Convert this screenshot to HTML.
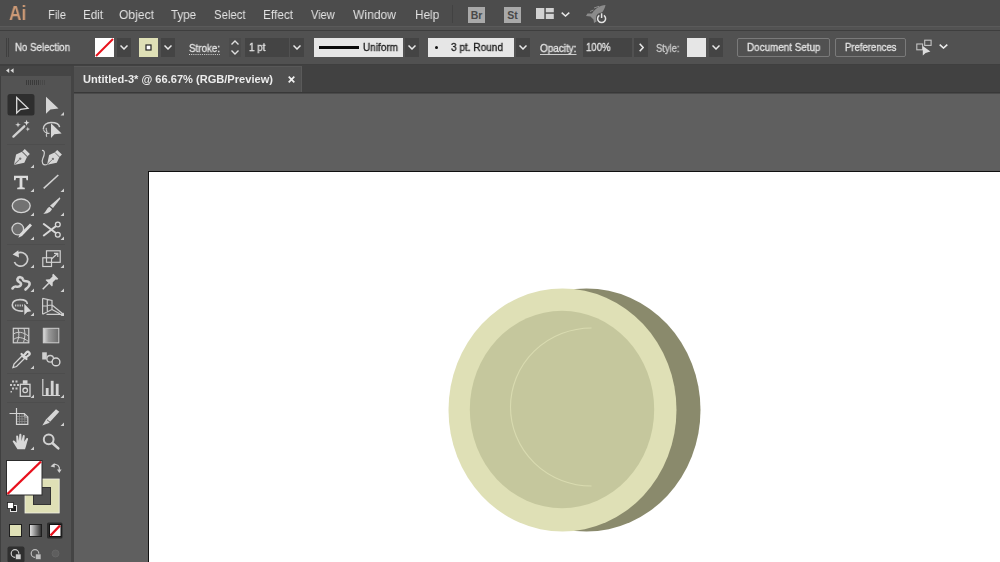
<!DOCTYPE html>
<html>
<head>
<meta charset="utf-8">
<style>
*{box-sizing:border-box;margin:0;padding:0}
html,body{width:1000px;height:562px;overflow:hidden;background:#5f5f5f;font-family:"Liberation Sans",sans-serif;}
.abs{position:absolute}
#menubar{left:0;top:0;width:1000px;height:26px;background:#4c4c4c}
#menusep1{left:0;top:26px;width:1000px;height:1px;background:#5a5a5a}
#menusep2{left:0;top:27px;width:1000px;height:3px;background:#525252}
#menusep3{left:0;top:30px;width:1000px;height:1px;background:#3e3e3e}
#ctrlbar{left:0;top:31px;width:1000px;height:33px;background:#515151}
#ctrlsep{left:0;top:64px;width:1000px;height:2px;background:#3f3f3f}
.mi,.ct,.tt{will-change:transform}
.mi{position:absolute;transform-origin:0 0;top:7px;font-size:13px;color:#e2e2e2;line-height:16px;white-space:nowrap}
.ct{position:absolute;transform-origin:0 0;font-size:10.5px;color:#e4e4e4;-webkit-text-stroke:0.3px currentColor;line-height:12px;white-space:nowrap}
.tt{position:absolute;transform-origin:0 0;font-size:11px;font-weight:bold;color:#ececec;line-height:13px;white-space:nowrap}
.dd{position:absolute;top:38px;width:14px;height:19px;background:#444444}
.dd svg{position:absolute;left:3px;top:7px}
.inp{position:absolute;top:38px;height:19px;background:#444444}
.lbox{position:absolute;top:38px;height:19px;background:#e6e6e6}
.btn{position:absolute;top:38px;height:19px;border:1px solid #7a7a7a;border-radius:2px}
#tabbar{left:74px;top:65px;width:926px;height:28px;background:#414141;border-bottom:1px solid #383838}
#tab{left:74px;top:66px;width:228px;height:26px;background:#505050;border-right:1px solid #5a5a5a;border-top:1px solid #585858}
#tabline{left:74px;top:93px;width:926px;height:1px;background:#4a4a4a}
#paste{left:74px;top:94px;width:926px;height:468px;background:#5f5f5f}
#art{left:148px;top:171px;width:860px;height:400px;background:#ffffff;border:1px solid #101010}
#tools{left:0;top:66px;width:71px;height:496px;background:#535353;border-left:1.500px solid #3f3f3f}
#toolhead{left:0;top:66px;width:71px;height:10px;background:#454545}
#toolgap{left:71px;top:66px;width:3px;height:496px;background:#444444}
</style>
</head>
<body>
<div class="abs" id="menubar"></div>
<div class="abs" id="menusep1"></div>
<div class="abs" id="menusep2"></div>
<div class="abs" id="menusep3"></div>
<div class="abs" id="ctrlbar"></div>
<div class="abs" id="ctrlsep"></div>

<!-- MENU -->
<div class="abs" style="will-change:transform;left:8.5px;top:2px;font-size:20px;line-height:22px;color:#cd9a76;font-weight:bold;transform-origin:0 0;transform:scaleX(.86)">Ai</div>
<div class="mi" style="left:47.5px;transform:scaleX(0.859)">File</div>
<div class="mi" style="left:82.5px;transform:scaleX(0.893)">Edit</div>
<div class="mi" style="left:119px;transform:scaleX(0.931)">Object</div>
<div class="mi" style="left:171px;transform:scaleX(0.887)">Type</div>
<div class="mi" style="left:214px;transform:scaleX(0.872)">Select</div>
<div class="mi" style="left:263px;transform:scaleX(0.909)">Effect</div>
<div class="mi" style="left:310.75px;transform:scaleX(0.850)">View</div>
<div class="mi" style="left:353px;transform:scaleX(0.930)">Window</div>
<div class="mi" style="left:414.5px;transform:scaleX(0.907)">Help</div>

<!-- MENU ICONS -->
<div class="abs" style="left:452px;top:5px;width:1px;height:18px;background:#424242"></div>
<div class="abs" style="left:468px;top:7px;width:17px;height:16px;background:#a9a9a9"></div>
<div class="abs" style="left:468px;top:8.5px;width:17px;text-align:center;font-size:10.5px;line-height:13px;font-weight:bold;color:#484848">Br</div>
<div class="abs" style="left:504px;top:7px;width:17px;height:16px;background:#a9a9a9"></div>
<div class="abs" style="left:504px;top:8.500px;width:17px;text-align:center;font-size:10.5px;line-height:13px;font-weight:bold;color:#484848">St</div>
<svg class="abs" style="left:536px;top:8px" width="18" height="12" viewBox="0 0 18 12"><rect x="0" y="0" width="8.300" height="11" fill="#d2d2d2"/><rect x="9.800" y="0" width="8" height="4.300" fill="#d2d2d2"/><rect x="9.800" y="5.800" width="8" height="5.200" fill="#d2d2d2"/></svg>
<svg class="abs" style="left:561px;top:12px" width="9" height="5" viewBox="0 0 9 5"><path d="M0.7 0.6 L4.500 4 L8.300 0.6" fill="none" stroke="#e6e6e6" stroke-width="1.500"/></svg>
<svg class="abs" style="left:585px;top:4px" width="24" height="20" viewBox="0 0 24 20"><path d="M20.500 1 C15 1.500 10 4.500 7 9.500 L2.500 9.500 L1 12 L5.500 12.500 L8.500 15.500 L9 19 L11.500 17.500 L11.500 13 C16 10.500 19.500 6.500 20.500 1 Z" fill="#8b8b8b"/><path d="M9 4 L14 2.300 M5 7.500 L8.500 6" stroke="#8b8b8b" stroke-width="1"/><circle cx="16.600" cy="14" r="5.600" fill="#4c4c4c"/><path d="M14.300 11.300 A4 4 0 1 0 18.900 11.300" fill="none" stroke="#e4e4e4" stroke-width="1.500"/><path d="M16.600 9.300 V14" stroke="#e4e4e4" stroke-width="1.500"/></svg>
<!-- CONTROL BAR -->
<div class="abs" style="left:6px;top:38px;width:1px;height:19px;background:#3f3f3f"></div>
<div class="abs" style="left:8px;top:38px;width:1px;height:19px;background:#3f3f3f"></div>
<div class="ct" style="left:15px;top:40.5px;transform:scaleX(0.924)">No Selection</div>
<!-- fill swatch -->
<svg class="abs" style="left:95px;top:38px" width="19" height="19" viewBox="0 0 19 19"><rect width="19" height="19" fill="#ffffff"/><line x1="1" y1="18" x2="18" y2="1" stroke="#e8111b" stroke-width="2"/></svg>
<div class="dd" style="left:117px"><svg width="8" height="5" viewBox="0 0 8 5"><path d="M0.5 0.5 L4 4 L7.5 0.5" fill="none" stroke="#e8e8e8" stroke-width="1.5"/></svg></div>
<!-- stroke swatch -->
<svg class="abs" style="left:139px;top:38px" width="19" height="19" viewBox="0 0 19 19"><rect width="19" height="19" fill="#dfe0b6"/><rect x="7" y="7" width="5" height="5" fill="#fff" stroke="#222" stroke-width="1.2"/></svg>
<div class="dd" style="left:161px"><svg width="8" height="5" viewBox="0 0 8 5"><path d="M0.5 0.5 L4 4 L7.5 0.5" fill="none" stroke="#e8e8e8" stroke-width="1.5"/></svg></div>
<div class="ct" style="left:189px;top:41.500px;text-decoration:underline dotted #cfcfcf 1px;text-underline-offset:2px;transform:scaleX(0.932)">Stroke:</div>
<!-- spinner -->
<div class="abs" style="left:228.500px;top:38px;width:12px;height:19px;background:#4b4b4b"></div>
<svg class="abs" style="left:231px;top:40px" width="8" height="15" viewBox="0 0 8 15"><path d="M0.5 4.5 L4 1 L7.5 4.5 M0.5 10.5 L4 14 L7.5 10.5" fill="none" stroke="#e0e0e0" stroke-width="1.4"/></svg>
<div class="inp" style="left:245px;width:44px"></div>
<div class="ct" style="left:249px;top:41px;transform:scaleX(0.942)">1 pt</div>
<div class="dd" style="left:290px"><svg width="8" height="5" viewBox="0 0 8 5"><path d="M0.5 0.5 L4 4 L7.5 0.5" fill="none" stroke="#e8e8e8" stroke-width="1.5"/></svg></div>
<!-- profile -->
<div class="lbox" style="left:314px;width:89px"></div>
<div class="abs" style="left:319px;top:46px;width:40px;height:3px;background:#0a0a0a"></div>
<div class="ct" style="left:363px;top:41px;color:#1a1a1a;transform:scaleX(0.952)">Uniform</div>
<div class="dd" style="left:405px"><svg width="8" height="5" viewBox="0 0 8 5"><path d="M0.5 0.5 L4 4 L7.5 0.5" fill="none" stroke="#e8e8e8" stroke-width="1.5"/></svg></div>
<!-- brush -->
<div class="lbox" style="left:428px;width:86px"></div>
<div class="abs" style="left:435px;top:46px;width:3px;height:3px;border-radius:2px;background:#111"></div>
<div class="ct" style="left:451px;top:41px;color:#1a1a1a;transform:scaleX(0.958)">3 pt. Round</div>
<div class="dd" style="left:516px"><svg width="8" height="5" viewBox="0 0 8 5"><path d="M0.5 0.5 L4 4 L7.5 0.5" fill="none" stroke="#e8e8e8" stroke-width="1.5"/></svg></div>
<!-- opacity -->
<div class="ct" style="left:539.5px;top:41.500px;text-decoration:underline solid #cfcfcf 1px;text-underline-offset:2px;transform:scaleX(0.948)">Opacity:</div>
<div class="inp" style="left:583px;width:49px"></div>
<div class="ct" style="left:586px;top:41px;transform:scaleX(0.912)">100%</div>
<div class="dd" style="left:634px"><svg style="left:5px;top:5px" width="5" height="9" viewBox="0 0 5 9"><path d="M0.7 0.7 L4.2 4.5 L0.7 8.3" fill="none" stroke="#e8e8e8" stroke-width="1.6"/></svg></div>
<!-- style -->
<div class="ct" style="left:656px;top:41.500px;color:#cdcdcd;transform:scaleX(0.895)">Style:</div>
<div class="lbox" style="left:687px;width:19px"></div>
<div class="dd" style="left:709px"><svg width="8" height="5" viewBox="0 0 8 5"><path d="M0.5 0.5 L4 4 L7.5 0.5" fill="none" stroke="#e8e8e8" stroke-width="1.5"/></svg></div>
<!-- buttons -->
<div class="btn" style="left:737px;width:93px"></div>
<div class="ct" style="left:747px;top:41px;transform:scaleX(0.940)">Document Setup</div>
<div class="btn" style="left:835px;width:71px"></div>
<div class="ct" style="left:844.5px;top:41px;transform:scaleX(0.909)">Preferences</div>
<!-- align icon -->
<svg class="abs" style="left:915px;top:38px" width="19" height="19" viewBox="0 0 19 19"><rect x="1.800" y="6" width="5.800" height="5.800" fill="none" stroke="#c4c4c4" stroke-width="1.100"/><rect x="9.700" y="2.200" width="6.400" height="5.200" fill="none" stroke="#c4c4c4" stroke-width="1.100"/><path d="M7.800 8 L7.800 17.600 L10.600 14.900 L15.400 13.600 Z" fill="#dcdcdc"/></svg>
<svg class="abs" style="left:938.500px;top:44.300px" width="9" height="5" viewBox="0 0 9 5"><path d="M0.7 0.6 L4.500 4 L8.300 0.6" fill="none" stroke="#ececec" stroke-width="1.600"/></svg>

<!-- DOC AREA -->
<div class="abs" id="tabbar"></div>
<div class="abs" id="tab"></div>
<div class="abs" id="tabline"></div>
<div class="tt" style="left:83px;top:73px;transform:scaleX(1.007)">Untitled-3* @ 66.67% (RGB/Preview)</div>
<svg class="abs" style="left:288px;top:76px" width="7" height="7" viewBox="0 0 7 7"><path d="M0.7 0.7 L6.300 6.300 M6.300 0.7 L0.7 6.300" stroke="#f0f0f0" stroke-width="1.7" fill="none"/></svg>
<div class="abs" id="paste"></div>
<div class="abs" id="art"></div>

<!-- ART -->
<svg class="abs" style="left:420px;top:270px" width="300" height="292" viewBox="420 270 300 292">
<ellipse cx="586.5" cy="410" rx="114" ry="121.6" fill="#8a8a6c"/>
<ellipse cx="562.5" cy="410" rx="114" ry="121.6" fill="#dfe0b6"/>
<ellipse cx="562" cy="409.500" rx="92.200" ry="98.700" fill="#c5c79d"/>
<path d="M591.500 328 A81 79 0 0 0 591.500 486" fill="none" stroke="#d9dbb0" stroke-width="1.100"/>
</svg>
<!-- TOOLS -->
<div class="abs" id="tools"></div>
<div class="abs" id="toolhead"></div>
<div class="abs" id="toolgap"></div>
<!--TOOLS-SVG-START-->
<svg class="abs" style="left:0;top:0" width="74" height="562" viewBox="0 0 74 562">
<defs>
<linearGradient id="gr1" x1="0" y1="0" x2="1" y2="0"><stop offset="0" stop-color="#dedede"/><stop offset="0.35" stop-color="#9a9a9a"/><stop offset="1" stop-color="#6a6a6a"/></linearGradient>
<linearGradient id="gr2" x1="0" y1="0" x2="1" y2="0"><stop offset="0" stop-color="#e8e8e8"/><stop offset="1" stop-color="#2a2a2a"/></linearGradient>
<path id="fly" d="M3.5 0 L3.5 3.5 L0 3.5 Z" fill="#d0d0d0"/>
<g id="nib"><path d="M-3.200 -8.500 L3.200 -8.500 L3.200 -5 L5.200 0.500 L0 8.500 L-5.200 0.500 L-3.200 -5 Z" fill="#d6d6d6"/><path d="M0 8 L0 1.500" stroke="#777" stroke-width="0.900"/><circle cx="0" cy="0.500" r="1.100" fill="#777"/><path d="M-3.200 -5.200 L3.200 -5.200" stroke="#6a6a6a" stroke-width="0.900"/></g>
</defs>
<!-- collapse arrows -->
<path d="M9.200 68.300 L9.200 72.900 L6 70.600 Z M13.600 68.300 L13.600 72.900 L10.400 70.600 Z" fill="#d8d8d8"/>
<!-- grip -->
<g stroke="#3a3a3a" stroke-width="1"><path d="M26.500 80 v5 M28.500 80 v5 M30.500 80 v5 M32.500 80 v5 M34.500 80 v5 M36.500 80 v5 M38.500 80 v5"/></g>
<g stroke="#484848" stroke-width="1"><path d="M40.500 80 v5 M42.500 80 v5 M44.500 80 v5"/></g>
<!-- group separators -->
<g stroke="#4d4d4d" stroke-width="1"><path d="M7 144.500 H65 M7 244.500 H65 M7 320.500 H65 M7 373.500 H65 M7 402.500 H65"/></g>
<!-- row1: selection -->
<rect x="7.500" y="94" width="27" height="21.500" rx="2.500" fill="#2e2e2e"/>
<path d="M16.700 97.500 L16.700 113 L20.600 109.300 L28 108.300 Z" fill="#2e2e2e" stroke="#dcdcdc" stroke-width="1.300" stroke-linejoin="miter"/>
<path d="M46 96.800 L46 113.800 L50.400 109.600 L58.500 108.600 Z" fill="#d6d6d6"/>
<use href="#fly" x="60.500" y="112"/>
<!-- row2: wand, lasso -->
<path d="M13.400 136.600 L24.300 126.300" stroke="#d2d2d2" stroke-width="2.300" stroke-linecap="round"/>
<path d="M18 121.900 L18.700 124 L20.800 124.700 L18.700 125.400 L18 127.500 L17.300 125.400 L15.200 124.700 L17.300 124 Z" fill="#d2d2d2"/>
<path d="M26.600 119.700 L27.400 121.900 L29.600 122.700 L27.400 123.500 L26.600 125.700 L25.800 123.500 L23.600 122.700 L25.800 121.900 Z" fill="#dcdcdc"/>
<path d="M27.800 126.800 L28.400 128.500 L30.100 129.100 L28.400 129.700 L27.800 131.400 L27.200 129.700 L25.500 129.100 L27.200 128.500 Z" fill="#cfcfcf"/>
<path d="M43.300 129.300 C43 125 47 122.400 51 122.400 C55.500 122.400 59.200 124.200 59.600 127.200" fill="none" stroke="#d0d0d0" stroke-width="1.500"/>
<path d="M43.500 129.500 C44 132 46.500 133.300 49.500 133.300 M46.500 128 C45 129.500 47.800 131 46.800 133 C46 134.800 45.800 135.500 46.800 136.800" fill="none" stroke="#c8c8c8" stroke-width="1.200"/>
<path d="M51 123.200 L51 137.900 L54.400 134.300 L61.600 133.400 Z" fill="#d8d8d8"/>
<!-- row3: pen, curvature -->
<g transform="translate(20.600,158.300) rotate(45) scale(1.12)"><use href="#nib"/></g>
<use href="#fly" x="30.500" y="164.500"/>
<g transform="translate(53.300,158.500) rotate(45) scale(1.04)"><use href="#nib"/></g>
<path d="M42 150.500 C45.500 150 44.500 155 42.800 158.500 C41 162.500 43 166 47 164.500" fill="none" stroke="#d0d0d0" stroke-width="1.200"/>
<!-- row4: type, line -->
<path d="M14 175.800 H28 V180.300 H26.500 L26 178 H22.400 V187.200 L24.800 187.700 V189.200 H17.200 V187.700 L19.600 187.200 V178 H16 L15.500 180.300 H14 Z" fill="#dcdcdc"/>
<use href="#fly" x="30.500" y="188.500"/>
<path d="M43.700 188.300 L58.300 175" stroke="#d2d2d2" stroke-width="1.600"/>
<use href="#fly" x="60.500" y="188.500"/>
<!-- row5: ellipse, brush -->
<ellipse cx="21.200" cy="205.800" rx="9" ry="6.800" fill="#727272" stroke="#d4d4d4" stroke-width="1.300"/>
<use href="#fly" x="30.500" y="212.500"/>
<path d="M59.800 197.300 L60.300 198.800 L53 208 L50 205.800 Z" fill="#d6d6d6"/>
<path d="M49.300 206.800 L52 208.900 C51 212 47 213.800 43.300 213.800 C46 212 46.500 208.500 49.300 206.800 Z" fill="#d6d6d6"/>
<use href="#fly" x="60.500" y="212.500"/>
<!-- row6: shaper, scissors -->
<circle cx="17.800" cy="229" r="5.800" fill="#6e6e6e" stroke="#d0d0d0" stroke-width="1.300"/>
<path d="M30 223.500 L32 225.500 L22 236 L18.300 237.800 L19.800 234 Z" fill="#dcdcdc"/>
<use href="#fly" x="30.500" y="236.500"/>
<path d="M43.800 224 L55.500 232.800 M43.800 235.500 L55.500 226.500" stroke="#d8d8d8" stroke-width="2" stroke-linecap="round"/>
<circle cx="57.800" cy="224.500" r="2.400" fill="none" stroke="#d8d8d8" stroke-width="1.300"/>
<circle cx="57.800" cy="234.800" r="2.400" fill="none" stroke="#d8d8d8" stroke-width="1.300"/>
<use href="#fly" x="60.500" y="236.500"/>
<!-- row7: rotate, scale -->
<path d="M17.500 253.200 A6.900 6.900 0 1 1 14.400 262" fill="none" stroke="#cdcdcd" stroke-width="1.700"/>
<path d="M12.600 254.600 L18.300 250.300 L19 257.500 Z" fill="#d6d6d6"/>
<use href="#fly" x="30.500" y="264.500"/>
<rect x="42.800" y="257.800" width="8.700" height="8.700" fill="none" stroke="#d2d2d2" stroke-width="1.200"/>
<rect x="46.500" y="250.800" width="13.700" height="11.500" fill="none" stroke="#d2d2d2" stroke-width="1.200"/>
<path d="M51.500 259 L57.500 253.500 M54 253.300 H57.800 V257" fill="none" stroke="#d2d2d2" stroke-width="1.200"/>
<use href="#fly" x="60.500" y="264.500"/>
<!-- row8: warp, pin -->
<path d="M12.500 288.500 C15 284 18 289 20.500 285.500 C23 282 16.500 282.500 17.500 279 C18.500 276 22.500 277 23 279.500 C24 283 28 279.500 29.500 283 C30.500 286 27 288 25.500 289.500" fill="none" stroke="#d2d2d2" stroke-width="2.600" stroke-linecap="round"/>
<use href="#fly" x="30.500" y="288.500"/>
<g transform="translate(50.500,281.500) rotate(45)"><path d="M-3.500 -7.500 H3.500 V-6 L2.200 -5 V-1 L4.500 1.500 V2.500 H-4.500 V1.500 L-2.200 -1 V-5 L-3.500 -6 Z" fill="#d6d6d6"/><path d="M0 2.500 V11" stroke="#d6d6d6" stroke-width="1.500"/></g>
<use href="#fly" x="60.500" y="288.500"/>
<!-- row9: shape builder, perspective -->
<path d="M12.300 305 C12 301.500 15.500 299.600 20 299.600 C24.500 299.600 27.300 301.500 27.300 304 M23.300 311 C17.500 311.500 12.600 309.500 12.300 305" fill="none" stroke="#cfcfcf" stroke-width="1.600"/>
<path d="M15 305.500 h8" stroke="#c4c4c4" stroke-width="2.200" stroke-dasharray="1.300 1"/>
<path d="M24.300 303.800 L24.300 315 L27.300 312 L31.300 311.300 Z" fill="#d8d8d8"/>
<use href="#fly" x="30.500" y="312.500"/>
<path d="M42.600 298.300 V314.300 M42.600 298.300 L52 300.500 V309.500 L42.600 314.300 M47.300 299.400 V312 M42.600 306 L52 305 M52 305 L63 314 M52 309.500 L60 313.800 M46.500 314.300 H63" fill="none" stroke="#cdcdcd" stroke-width="1.200"/>
<use href="#fly" x="60.500" y="312.500"/>
<!-- row10: mesh, gradient -->
<rect x="13.300" y="328.300" width="15.500" height="14.500" fill="#606060" stroke="#d2d2d2" stroke-width="1.200"/>
<path d="M13.500 334 C18 331 23 332 28.500 336 M13.500 339.500 C18 336 23 337.500 28.500 341.500 M18 328.500 C19.500 333 19 338 17 342.500 M24 328.500 C25.500 333 25 338 23.500 342.500" fill="none" stroke="#cdcdcd" stroke-width="1"/>
<rect x="43.300" y="328.300" width="15.500" height="14.500" fill="url(#gr1)" stroke="#cfcfcf" stroke-width="1"/>
<!-- row11: eyedropper, blend -->
<path d="M13 367.500 L14 364 L22 356 L24.500 358.500 L16.500 366.500 Z" fill="none" stroke="#d4d4d4" stroke-width="1.300"/>
<path d="M21.500 354 L26.500 359 M23.300 356.200 L26.500 352.300 A1.800 1.800 0 0 1 29 355 L25.300 358" stroke="#d8d8d8" stroke-width="2.200" fill="none" stroke-linecap="round"/>
<use href="#fly" x="30.500" y="365.500"/>
<rect x="42.200" y="352.300" width="4.600" height="7.200" fill="#cfcfcf"/>
<circle cx="50.200" cy="358.800" r="3.300" fill="#535353" stroke="#cdcdcd" stroke-width="1.300"/>
<circle cx="56" cy="361.900" r="3.900" fill="#535353" stroke="#d6d6d6" stroke-width="1.400"/>
<!-- row12: sprayer, graph -->
<rect x="20.300" y="384.300" width="9.700" height="12" fill="none" stroke="#d4d4d4" stroke-width="1.300"/>
<rect x="22.800" y="380.300" width="4.700" height="3.500" fill="#d4d4d4"/>
<circle cx="25.200" cy="390.300" r="2.300" fill="none" stroke="#d4d4d4" stroke-width="1.300"/>
<g fill="#c8c8c8"><rect x="12" y="380.500" width="2" height="2"/><rect x="15.500" y="380.500" width="2" height="2"/><rect x="10" y="384" width="2" height="2"/><rect x="13.500" y="384" width="2" height="2"/><rect x="17" y="384" width="2" height="2"/><rect x="12" y="387.500" width="2" height="2"/><rect x="15.500" y="387.500" width="2" height="2"/><rect x="10.500" y="391" width="1.500" height="1.500"/></g>
<use href="#fly" x="30.500" y="394.500"/>
<path d="M42.800 379 V395.500 H60" fill="none" stroke="#d4d4d4" stroke-width="1.200"/>
<rect x="45.800" y="388" width="2.800" height="7" fill="#d4d4d4"/><rect x="50.800" y="380.800" width="2.800" height="14.200" fill="#d4d4d4"/><rect x="55.800" y="383.800" width="2.800" height="11.200" fill="#d4d4d4"/>
<use href="#fly" x="60.500" y="394.500"/>
<!-- row13: artboard, slice -->
<path d="M16.500 408 V424.300 H27.800 V417 L24.300 413.500 H9.500" fill="none" stroke="#d4d4d4" stroke-width="1.200"/>
<path d="M24.300 413.500 V417 H27.800" fill="none" stroke="#d4d4d4" stroke-width="1"/>
<path d="M17 416.500 H27 M17 419 H27 M17 421.500 H27 M19.500 414 V424 M22 414 V424 M24.800 417 V424" stroke="#8e8e8e" stroke-width="0.800"/>
<path d="M56 409.300 L59.300 411.800 L49 423 L42.300 425.500 L46 419.500 Z" fill="#d6d6d6"/>
<path d="M47 419.800 L50.500 422.500" stroke="#535353" stroke-width="0.900"/>
<use href="#fly" x="60.500" y="422.500"/>
<!-- row14: hand, zoom -->
<path d="M17.500 449.300 C15.500 446 14 443.500 12.800 441.800 C12.300 440.500 13.800 439.800 14.800 441 L16.500 443 L16.200 436.500 C16.200 435.200 18 435.200 18.200 436.500 L18.800 441 L19.300 434.800 C19.400 433.500 21.300 433.500 21.400 434.800 L21.500 441 L22.800 435.800 C23.100 434.600 24.900 435 24.700 436.300 L24.200 441.800 L26.300 438.500 C27 437.500 28.500 438.300 28 439.500 C26.800 442.500 26.300 446 25 449.300 Z" fill="#d8d8d8"/>
<use href="#fly" x="30.500" y="446.500"/>
<circle cx="48.700" cy="439.300" r="4.900" fill="none" stroke="#d0d0d0" stroke-width="2"/>
<path d="M52.600 443.200 L58.300 448.400" stroke="#d4d4d4" stroke-width="2.600" stroke-linecap="round"/>
<!-- fill / stroke -->
<rect x="25" y="479" width="34.200" height="34" fill="#dfe0b6" stroke="#f1f1e4" stroke-width="0.800"/>
<rect x="33.500" y="487.500" width="17" height="17" fill="#515151" stroke="#333" stroke-width="1"/>
<rect x="6.500" y="460.500" width="35.500" height="34.500" fill="#ffffff" stroke="#2c2c2c" stroke-width="1"/>
<path d="M7.500 494 L41 461.500" stroke="#e8101c" stroke-width="2.400"/>
<path d="M52 466 C54 463.500 58 464 59.300 467.500 V471" fill="none" stroke="#cfcfcf" stroke-width="1.200"/>
<path d="M50.500 466.500 L54.500 463 L54.800 467.500 Z M57 469.500 L61.600 469.500 L59.300 473 Z" fill="#cfcfcf"/>
<rect x="10.500" y="505.500" width="6" height="6" fill="#1c1c1c" stroke="#e8e8e8" stroke-width="1"/>
<rect x="7.500" y="502.500" width="6" height="6" fill="#ffffff" stroke="#222" stroke-width="0.800"/>
<!-- color / gradient / none -->
<rect x="9.500" y="524.500" width="12" height="12" fill="#dfe0b6" stroke="#1e1e1e" stroke-width="1"/>
<rect x="29.500" y="524.500" width="12" height="12" fill="url(#gr2)" stroke="#1e1e1e" stroke-width="1"/>
<rect x="47" y="522.500" width="15.500" height="16" rx="1.500" fill="#2c2c2c"/>
<rect x="49.500" y="524.500" width="11.500" height="12" fill="#ffffff" stroke="#111" stroke-width="1"/>
<path d="M50.500 535.500 L60 525.500" stroke="#e8101c" stroke-width="2.400"/>
<!-- draw modes -->
<rect x="7.500" y="546.500" width="17" height="16" rx="2" fill="#2f2f2f"/>
<circle cx="15" cy="553.500" r="3.800" fill="none" stroke="#cfcfcf" stroke-width="1.200"/><rect x="15.500" y="554" width="5.500" height="5.500" fill="#cfcfcf" stroke="#2f2f2f" stroke-width="0.600"/>
<circle cx="35" cy="553.500" r="3.800" fill="none" stroke="#bdbdbd" stroke-width="1.200"/><rect x="35.500" y="554" width="5.500" height="5.500" fill="#bdbdbd" stroke="#535353" stroke-width="0.600"/>
<circle cx="55.500" cy="553.500" r="3.500" fill="#5e5e5e" stroke="#666" stroke-width="1"/>
</svg>
<!--TOOLS-SVG-END-->
</body>
</html>
